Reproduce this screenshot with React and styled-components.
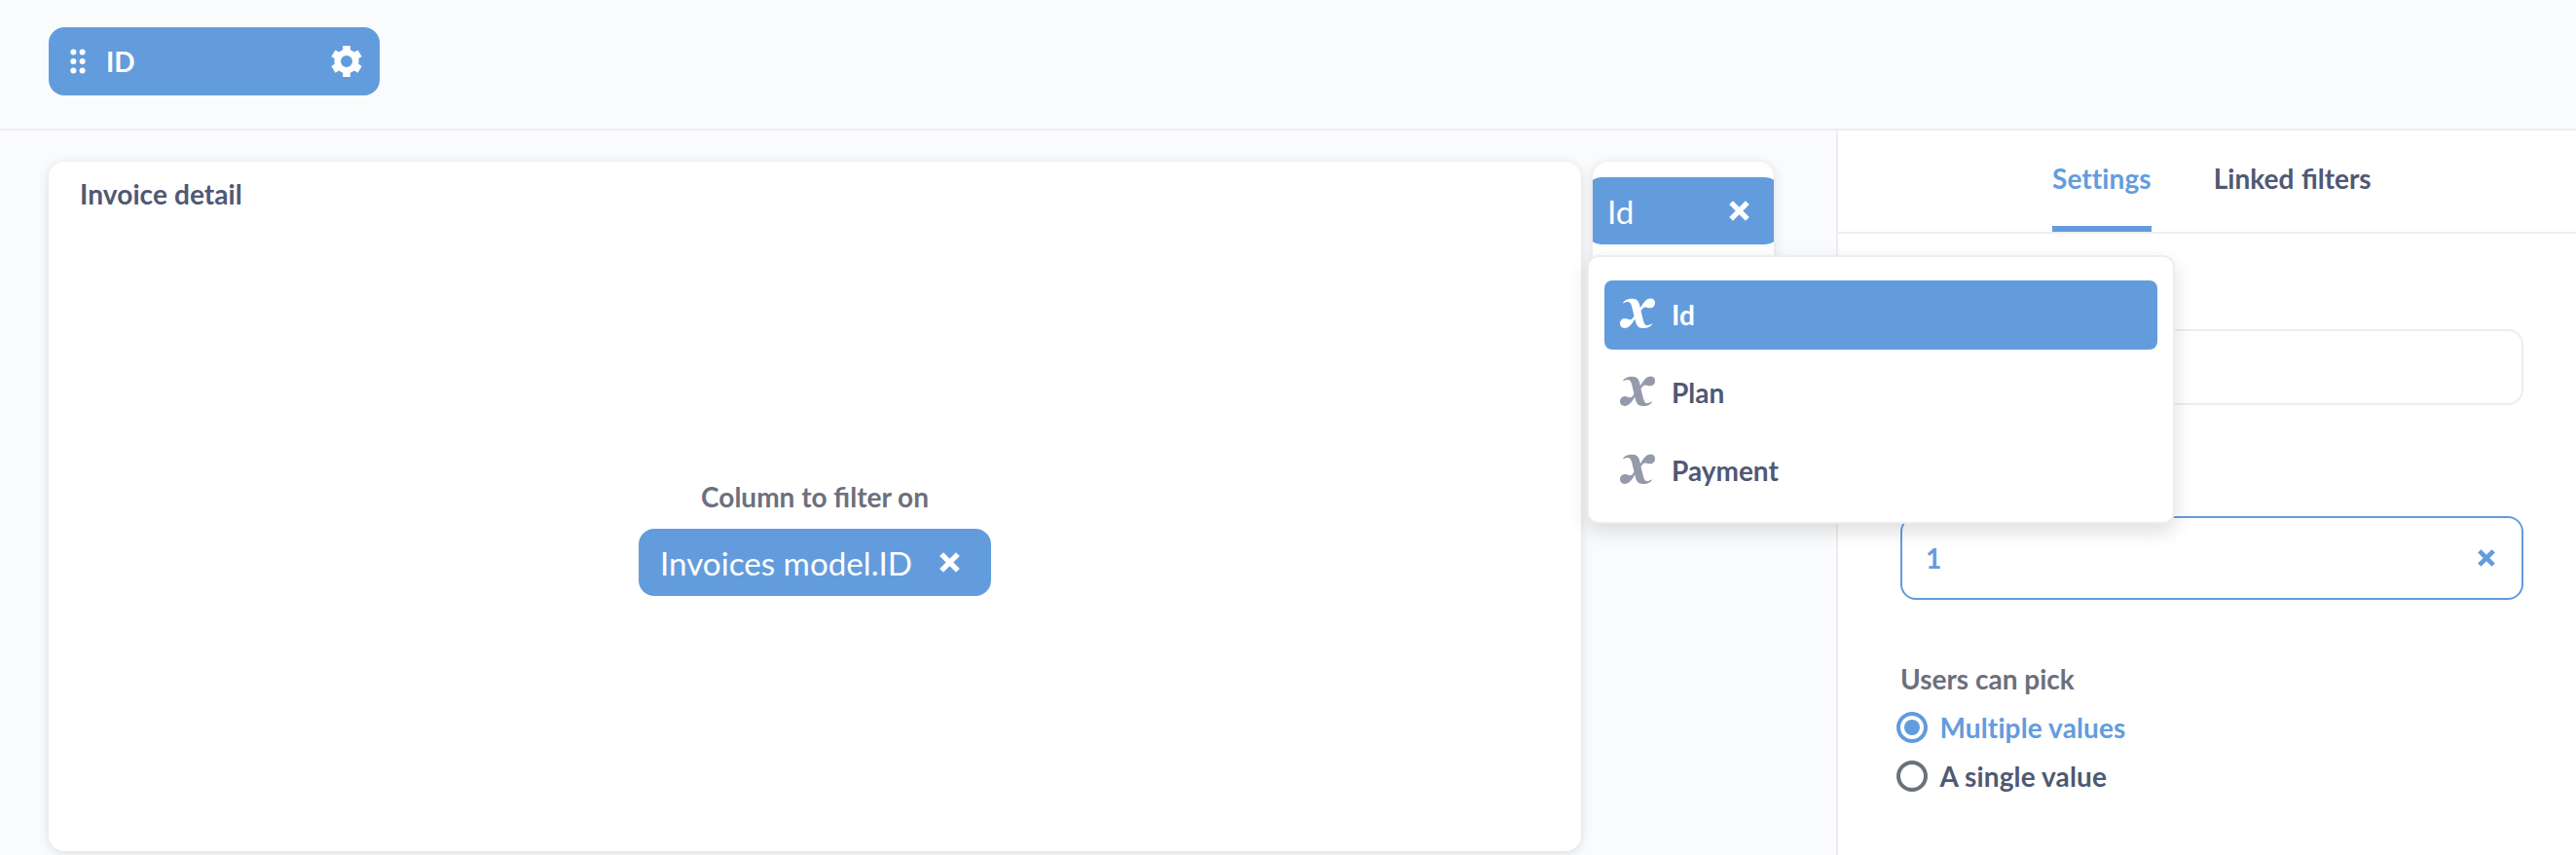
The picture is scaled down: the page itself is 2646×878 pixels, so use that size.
import React from "react";
import styled, { createGlobalStyle, css } from "styled-components";

const brand = "#639cdd";
const textDark = "#4f5974";
const textMedium = "#6b707d";
const border = "#eeecee";

const GlobalStyle = createGlobalStyle`
  * { box-sizing: border-box; }
  body { margin: 0; }
`;

const Page = styled.div`
  display: flex;
  flex-direction: column;
  width: 100%;
  height: 878px;
  overflow: hidden;
  background: #fafbfd;
  color: ${textDark};
  font-family: Lato, "Liberation Sans", sans-serif;
  font-size: 28px;
  font-weight: 700;
  line-height: 34px;
`;

const FilterBar = styled.header`
  flex: none;
  height: 134px;
  padding: 28px 50px 0;
  border-bottom: 2px solid ${border};
`;

const FilterPill = styled.div`
  display: flex;
  align-items: center;
  width: 340px;
  height: 70px;
  padding: 0 18px 0 22px;
  border-radius: 16px;
  background: ${brand};
  color: #fff;
`;

const PillLabel = styled.span`
  flex: 1;
  margin-left: 21px;
`;

const Body = styled.div`
  flex: 1;
  display: flex;
  min-height: 0;
`;

const Canvas = styled.main`
  flex: 1;
  display: flex;
  align-items: flex-start;
  gap: 12px;
  padding: 32px 0 0 50px;
`;

const cardSurface = css`
  border-radius: 16px;
  background: #fff;
  box-shadow: 0 2px 12px rgba(0, 0, 0, 0.13);
`;

const DetailCard = styled.section`
  ${cardSurface}
  display: flex;
  flex-direction: column;
  width: 1574px;
  height: 708px;
`;

const CardTitle = styled.h2`
  margin: 0;
  padding: 16px 32px 0;
  font-size: inherit;
  letter-spacing: 0.1px;
`;

const Mapping = styled.div`
  flex: 1;
  display: flex;
  flex-direction: column;
  align-items: center;
  padding-top: 277px;
`;

const MappingLabel = styled.div`
  color: ${textMedium};
`;

const chip = css`
  display: flex;
  align-items: center;
  justify-content: space-between;
  flex: none;
  height: 69px;
  border-radius: 16px;
  background: ${brand};
  color: #fff;
  font-size: 33.2px;
  font-weight: 400;
`;

const ColumnChip = styled.div`
  ${chip}
  width: 362px;
  margin-top: 16px;
  padding: 0 32.5px 0 22px;
`;

const SmallCard = styled.section`
  ${cardSurface}
  position: relative;
  width: 186px;
  height: 130px;
`;

const SmallCardClip = styled.div`
  display: flex;
  justify-content: center;
  height: 100%;
  padding-top: 16px;
  border-radius: 16px;
  overflow: hidden;
`;

const VariableChip = styled.div`
  ${chip}
  width: 200px;
  padding: 0 32.5px 0 22px;
`;

const Popover = styled.div`
  position: absolute;
  top: 96px;
  left: -6px;
  z-index: 2;
  display: flex;
  flex-direction: column;
  gap: 9px;
  width: 604px;
  height: 276px;
  padding: 24px 16px;
  border: 2px solid ${border};
  border-radius: 12px;
  background: #fff;
  box-shadow: 0 8px 20px rgba(0, 0, 0, 0.13);
`;

const Option = styled.div`
  display: flex;
  align-items: center;
  gap: 17px;
  flex: none;
  height: 71px;
  padding: 0 16px 2px;
  border-radius: 8px;
  background: ${(p) => (p.$selected ? brand : "transparent")};
  color: ${(p) => (p.$selected ? "#fff" : textDark)};

  svg {
    margin-bottom: 2px;
    color: ${(p) => (p.$selected ? "#fff" : "#949aab")};
  }
`;

const Sidebar = styled.aside`
  display: flex;
  flex-direction: column;
  width: 760px;
  border-left: 2px solid ${border};
  background: #fff;
`;

const Tabs = styled.nav`
  display: flex;
  gap: 64px;
  flex: none;
  height: 106px;
  padding-left: 220px;
  border-bottom: 2px solid ${border};
`;

const Tab = styled.div`
  height: 104px;
  padding-top: 32px;
  border-bottom: 6px solid ${(p) => (p.$active ? brand : "transparent")};
  color: ${(p) => (p.$active ? brand : textDark)};
  letter-spacing: ${(p) => (p.$active ? "0.1px" : "normal")};
  word-spacing: 0.8px;
`;

const Form = styled.div`
  display: flex;
  flex-direction: column;
  padding: 98px 54px 0 64px;
`;

const TextField = styled.div`
  height: 78px;
  border: 2px solid ${border};
  border-radius: 16px;
`;

const ValueField = styled.div`
  display: flex;
  align-items: center;
  justify-content: space-between;
  height: 86px;
  margin-top: 114px;
  padding: 0 27px 0 24px;
  border: 2px solid ${brand};
  border-radius: 16px;
  color: ${brand};
`;

const GroupLabel = styled.div`
  margin-top: 64px;
  color: ${textMedium};
`;

const Radios = styled.div`
  display: flex;
  flex-direction: column;
  gap: 16px;
  margin: 16px 0 0 -4px;
`;

const Radio = styled.label`
  display: flex;
  align-items: center;
  gap: 12.5px;
  height: 34px;
  color: ${(p) => (p.$checked ? brand : textDark)};
  letter-spacing: 0.13px;
`;

const RadioDot = styled.span`
  width: 32px;
  height: 32px;
  padding: 4px;
  border: 4px solid ${(p) => (p.$checked ? brand : textMedium)};
  border-radius: 50%;
  background: ${(p) => (p.$checked ? brand : "transparent")} content-box;
`;

const GripIcon = () => (
  <svg width="16" height="26" viewBox="0 0 16 26" fill="currentColor">
    {[3.4, 12.6].map((x) =>
      [3.6, 13, 22.4].map((y) => <circle key={`${x}-${y}`} cx={x} cy={y} r="3" />)
    )}
  </svg>
);

const GearIcon = () => (
  <svg width="32" height="32" viewBox="0 0 32 32" fill="currentColor">
    <path
      fillRule="evenodd"
      d="M12.2 0h7.6v4.2a12.3 12.3 0 0 1 4 2.3l3.8-2.1 4 6.6-3.3 2.3a12.6 12.6 0 0 1 0 5.4l3.3 2.3-4 6.7-3.8-2.2a12.3 12.3 0 0 1-4 2.3V32h-7.6v-4.2a12.3 12.3 0 0 1-4-2.3l-3.8 2.2-4-6.7 3.3-2.3a12.6 12.6 0 0 1 0-5.4L.4 11l4-6.6 3.8 2.1a12.3 12.3 0 0 1 4-2.3ZM16 10a6 6 0 1 0 0 12a6 6 0 1 0 0-12Z"
    />
  </svg>
);

const CloseIcon = ({ size = 21 }) => (
  <svg width={size} height={size} viewBox="0 0 20 20" fill="none" stroke="currentColor" strokeWidth="5.2">
    <path d="M2 2 18 18M18 2 2 18" />
  </svg>
);

const VariableIcon = () => (
  <svg width="36" height="32" viewBox="0 0 36 32" fill="currentColor">
    <path d="M3 5.6C3.6 2.3 8 .7 12.6.7C18 .7 19.6 3.4 21 10.2C24 5.2 26.6.5 31.5.5C34.5.5 36 2.4 36 4.9C36 8 34 10.3 31 10.3C28.8 10.3 27.3 9.5 25.7 9.5C24 9.5 22.7 11.3 21.5 13.3L24 23.2C24.8 26.4 25.8 28 27.6 28C29.6 28 31 27.3 32.8 26.2C33.2 28.8 28.6 31 23.6 31C18.4 31 16.7 28.4 15.2 21.6C12.2 27.4 9 30.9 4.7 30.9C1.7 30.9 0 28.9 0 26.3C0 23.2 2.2 21.1 5.1 21.1C7.2 21.1 8.6 22.3 10.3 22.3C12 22.3 13.3 20.6 14.5 18.5L12.2 9.1C11.3 5.5 10.2 3.9 8 3.9C6.2 3.9 4.6 4.5 3 5.6Z" />
  </svg>
);

const options = ["Id", "Plan", "Payment"];

export default function App() {
  return (
    <Page>
      <GlobalStyle />
      <FilterBar>
        <FilterPill>
          <GripIcon />
          <PillLabel>ID</PillLabel>
          <GearIcon />
        </FilterPill>
      </FilterBar>
      <Body>
        <Canvas>
          <DetailCard>
            <CardTitle>Invoice detail</CardTitle>
            <Mapping>
              <MappingLabel>Column to filter on</MappingLabel>
              <ColumnChip>
                Invoices model.ID
                <CloseIcon />
              </ColumnChip>
            </Mapping>
          </DetailCard>
          <SmallCard>
            <SmallCardClip>
              <VariableChip>
                Id
                <CloseIcon />
              </VariableChip>
            </SmallCardClip>
            <Popover>
              {options.map((name, i) => (
                <Option key={name} $selected={i === 0}>
                  <VariableIcon />
                  {name}
                </Option>
              ))}
            </Popover>
          </SmallCard>
        </Canvas>
        <Sidebar>
          <Tabs>
            <Tab $active>Settings</Tab>
            <Tab>Linked filters</Tab>
          </Tabs>
          <Form>
            <TextField />
            <ValueField>
              1
              <CloseIcon size={18} />
            </ValueField>
            <GroupLabel>Users can pick</GroupLabel>
            <Radios>
              <Radio $checked>
                <RadioDot $checked />
                Multiple values
              </Radio>
              <Radio>
                <RadioDot />
                A single value
              </Radio>
            </Radios>
          </Form>
        </Sidebar>
      </Body>
    </Page>
  );
}
